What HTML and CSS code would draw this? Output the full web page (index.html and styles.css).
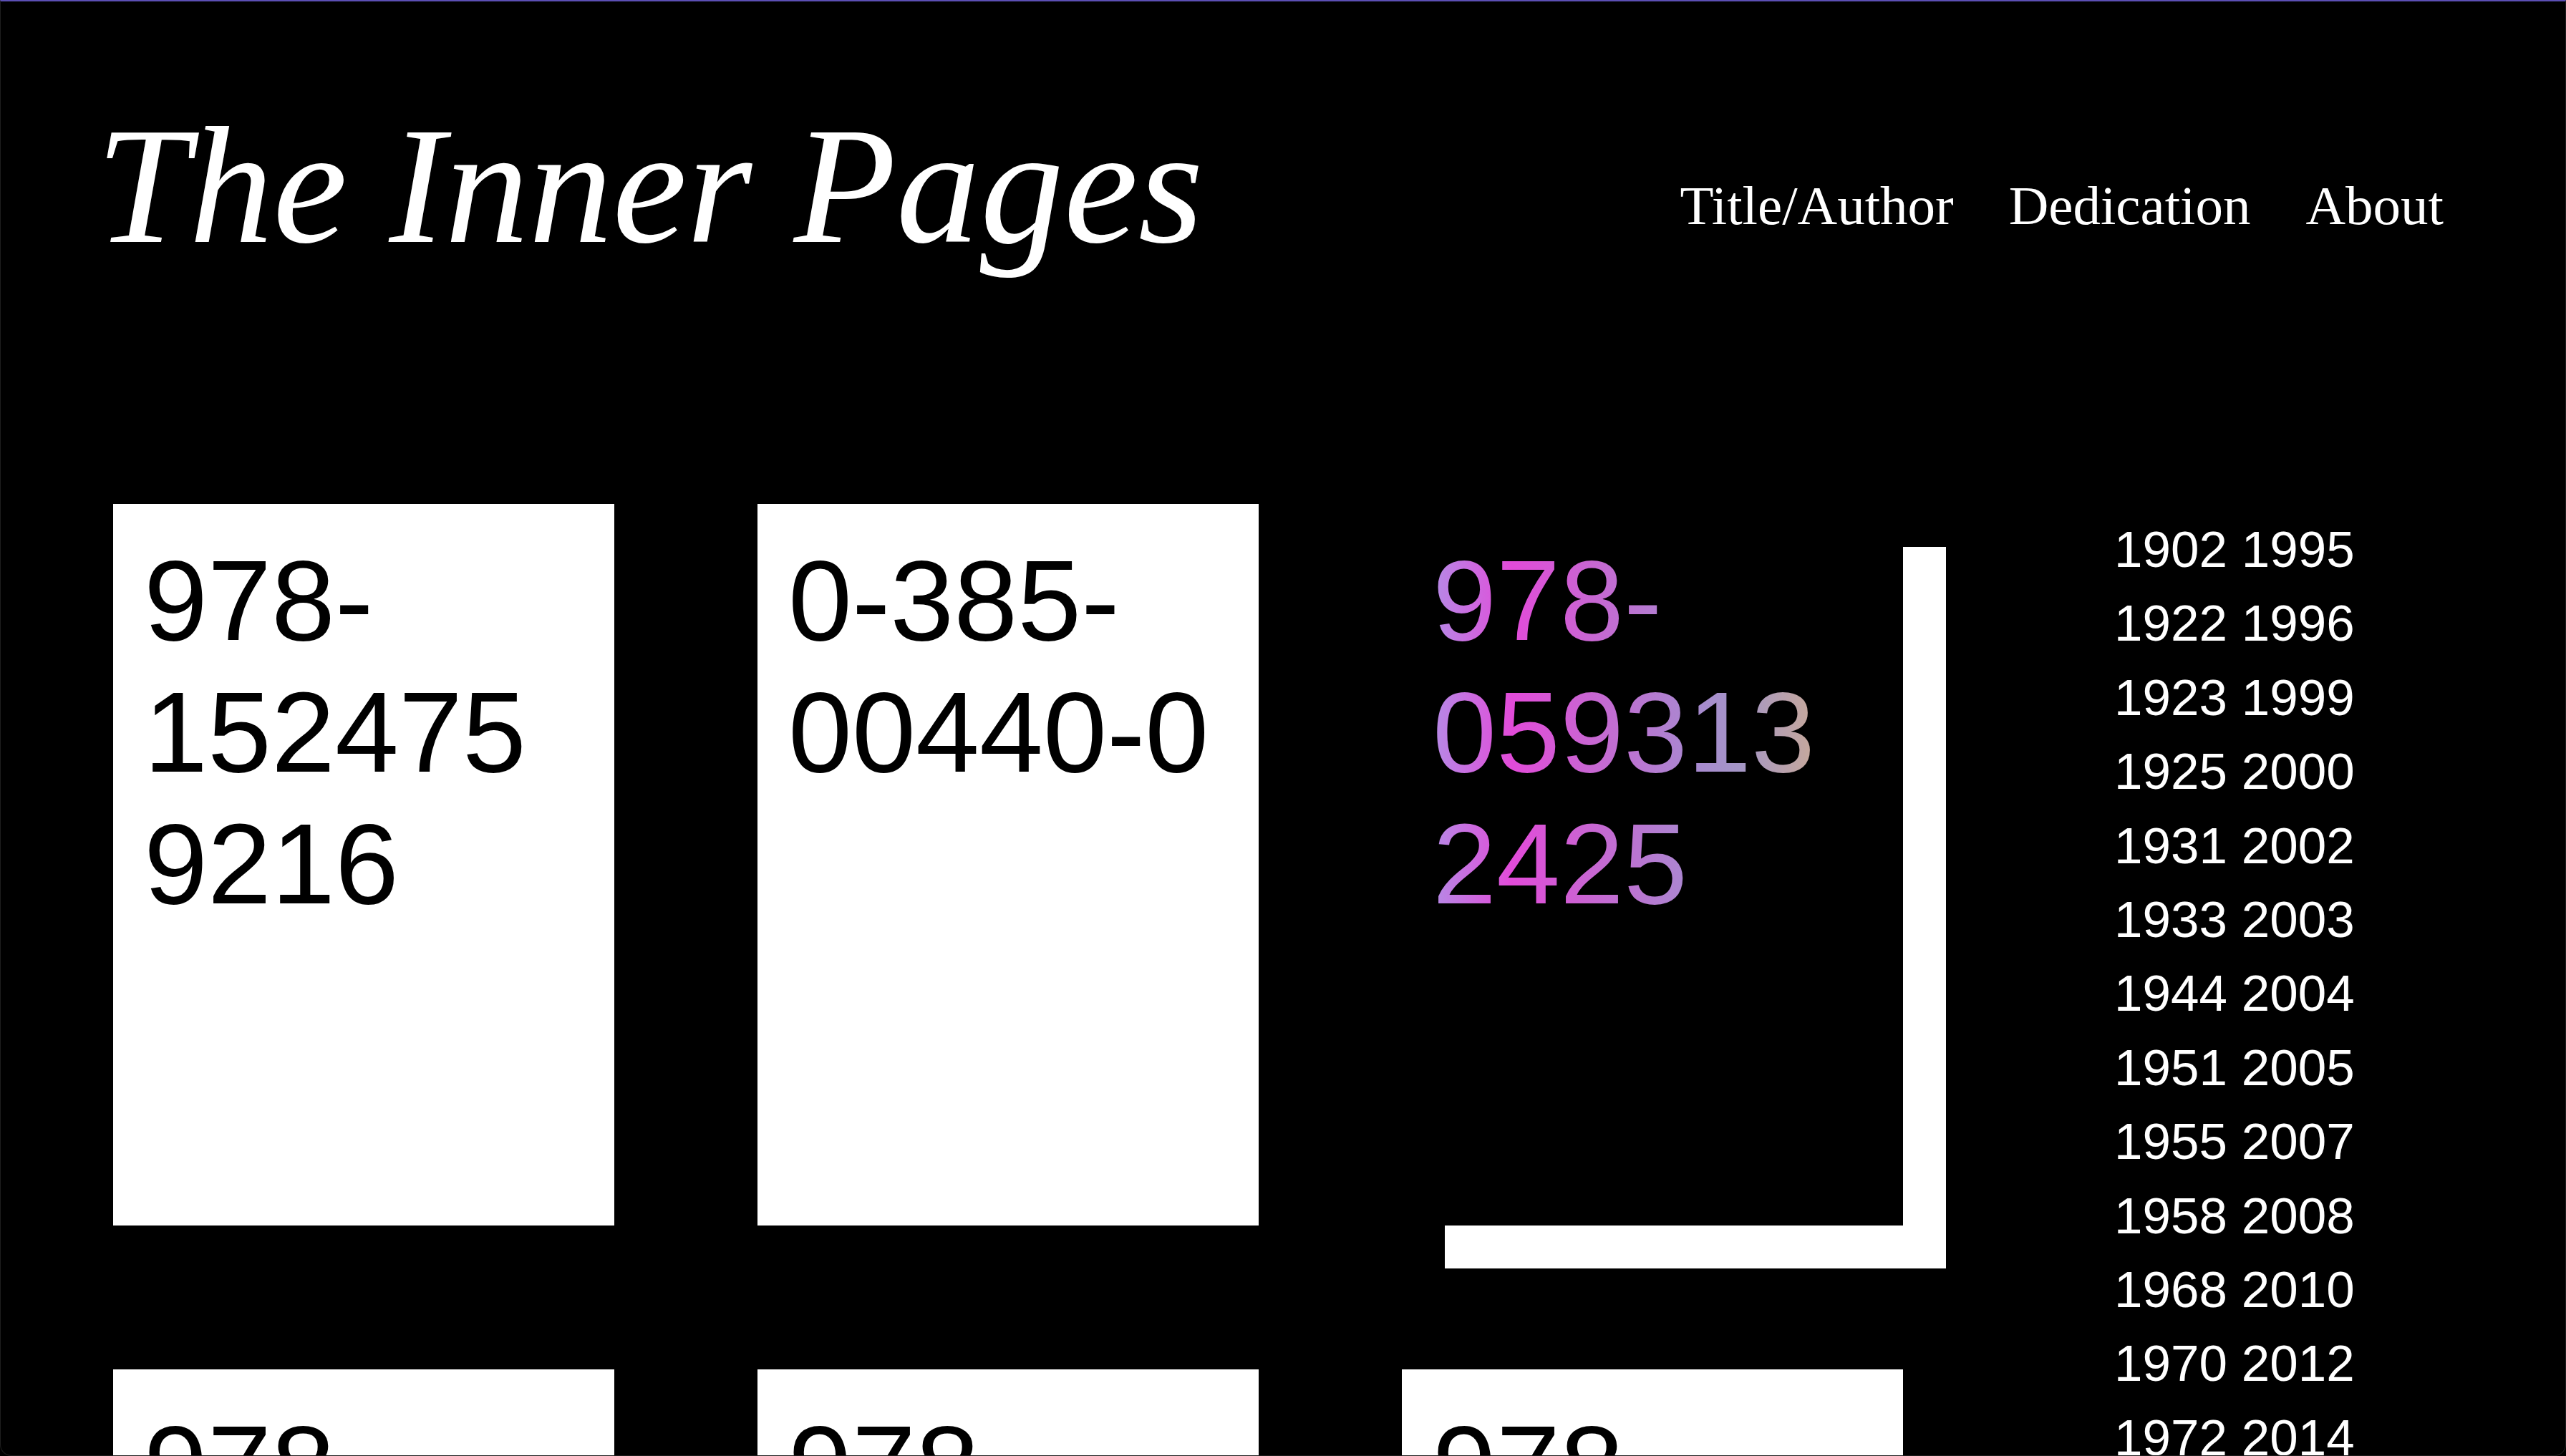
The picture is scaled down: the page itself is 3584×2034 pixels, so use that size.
FILE: index.html
```html
<!DOCTYPE html>
<html lang="en">
<head>
    <meta charset="UTF-8">
    <meta name="viewport" content="width=device-width, initial-scale=1.0">
    <title>The Inner Pages</title>
    <link rel="stylesheet" href="styles.css">
</head>
<body>
    <div class="window-frame"></div>

    <header class="site-header">
        <h1 class="site-title">The Inner Pages</h1>
        <nav class="site-nav">
            <a href="#">Title/Author</a>
            <a href="#">Dedication</a>
            <a href="#">About</a>
        </nav>
    </header>

    <main class="shelf">
        <section class="book-grid">
            <div class="book-card"><p class="isbn">978-1524759216</p></div>
            <div class="book-card"><p class="isbn">0-385-00440-0</p></div>
            <div class="book-card active"><p class="isbn">978-0593132425</p></div>
            <div class="book-card"><p class="isbn">978-0156030083</p></div>
            <div class="book-card"><p class="isbn">978-0099511021</p></div>
            <div class="book-card"><p class="isbn">978-0143105428</p></div>
        </section>

        <aside class="year-list">
            <p>1902 1995</p>
            <p>1922 1996</p>
            <p>1923 1999</p>
            <p>1925 2000</p>
            <p>1931 2002</p>
            <p>1933 2003</p>
            <p>1944 2004</p>
            <p>1951 2005</p>
            <p>1955 2007</p>
            <p>1958 2008</p>
            <p>1968 2010</p>
            <p>1970 2012</p>
            <p>1972 2014</p>
            <p>1976 2016</p>
            <p>1981 2018</p>
        </aside>
    </main>
</body>
</html>
```

FILE: styles.css
```css
* {
    margin: 0;
    padding: 0;
    box-sizing: border-box;
}

body {
    background-color: #000;
    color: #fff;
    font-family: 'Liberation Sans', Arial, sans-serif;
}

/* thin browser frame drawn over the page */
.window-frame {
    position: fixed;
    inset: 0;
    border-top: 2px solid #5b4fb4;
    border-left: 1px solid #1e1e1e;
    border-right: 1px solid #1e1e1e;
    border-bottom: 1px solid #1e1e1e;
    border-radius: 0 0 16px 16px;
    pointer-events: none;
    z-index: 10;
}

.site-header {
    display: flex;
    justify-content: space-between;
    align-items: flex-start;
    padding: 142px 171px 0 134px;
}

.site-title {
    font-family: 'Liberation Serif', 'Times New Roman', serif;
    font-style: italic;
    font-weight: normal;
    font-size: 234px;
    line-height: 1;
    color: #fff;
}

.site-nav {
    display: flex;
    gap: 77px;
    margin-top: 107px;
}

.site-nav a {
    font-family: 'Liberation Serif', 'Times New Roman', serif;
    font-size: 77px;
    line-height: 1;
    color: #fff;
    text-decoration: none;
}

.shelf {
    display: flex;
    align-items: flex-start;
    padding: 328px 0 0 158px;
}

.book-grid {
    display: grid;
    grid-template-columns: repeat(3, 700px);
    grid-auto-rows: 1008px;
    gap: 201px 200px;
}

.book-card {
    background-color: #fff;
    color: #000;
    padding: 43px;
}

.isbn {
    font-size: 160px;
    line-height: normal;
    overflow-wrap: break-word;
}

.book-card.active {
    background-color: #000;
    box-shadow: 60px 60px 0 #fff;
}

.book-card.active .isbn {
    background: linear-gradient(90deg, #b68ae6 0%, #e24bd9 18%, #c866d2 36%, #a88ad0 60%, #a496c6 70%, #c9aa98 88%, #d4b48c 100%);
    -webkit-background-clip: text;
    background-clip: text;
    color: transparent;
}

.year-list {
    margin-left: 295px;
    padding-top: 12px;
}

.year-list p {
    font-size: 71px;
    line-height: 103.4px;
    color: #fff;
    white-space: nowrap;
}
```
